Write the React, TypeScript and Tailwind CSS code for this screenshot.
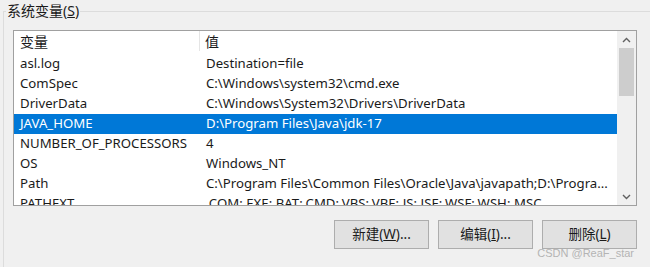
import React from "react";

const rows: [string, string][] = [
  ["asl.log", "Destination=file"],
  ["ComSpec", "C:\\Windows\\system32\\cmd.exe"],
  ["DriverData", "C:\\Windows\\System32\\Drivers\\DriverData"],
  ["JAVA_HOME", "D:\\Program Files\\Java\\jdk-17"],
  ["NUMBER_OF_PROCESSORS", "4"],
  ["OS", "Windows_NT"],
  ["Path", "C:\\Program Files\\Common Files\\Oracle\\Java\\javapath;D:\\Progra..."],
  ["PATHEXT", ".COM;.EXE;.BAT;.CMD;.VBS;.VBE;.JS;.JSE;.WSF;.WSH;.MSC"],
];

const font = { fontFamily: '"Noto Sans", "Noto Sans CJK SC", sans-serif' };

const Btn = ({ label, hot, tail }: { label: string; hot: string; tail: string }) => (
  <button className="w-[95px] h-[29px] bg-[#e1e1e1] border border-[#adadad] text-[13.5px] text-[#1a1a1a] flex items-center justify-center">
    {label}(<span className="underline">{hot}</span>){tail}
  </button>
);

const App = () => {
  return (
    <div className="w-[650px] h-[267px] bg-[#f0f0f0] overflow-hidden text-[#1a1a1a]" style={font}>
      <fieldset className="ml-[3px] w-[700px] h-[300px] border border-[#dcdcdc] px-[9px] pt-0 mt-[1px]">
        <legend className="px-[1px] -ml-[7px] text-[14px] leading-[20px]">
          系统变量(<span className="underline">S</span>)
        </legend>

        {/* list box */}
        <div className="mt-[9px] w-[624px] h-[176px] border border-[#a0a0a0] bg-white flex">
          <div className="w-[603px] overflow-hidden text-[13.2px]">
            <div className="flex h-[23px] items-center text-[14px] pb-[3px]">
              <div className="w-[186px] shrink-0 h-full pl-[6px] flex items-center border-r border-[#e5e5e5]">变量</div>
              <div className="pl-[5px]">值</div>
            </div>
            {rows.map(([k, v], i) => (
              <div
                key={k}
                className={
                  "flex h-[20px] items-center whitespace-nowrap " +
                  (i === 3 ? "bg-[#0078d7] text-white" : "")
                }
              >
                <div className="w-[186px] shrink-0 pl-[6px]">{k}</div>
                <div className="pl-[6px]">{v}</div>
              </div>
            ))}
          </div>
          {/* scrollbar */}
          <div className="w-[19px] bg-[#f0f0f0] flex flex-col items-center">
            <div className="h-[17px] flex items-center justify-center">
              <svg width="9" height="6" viewBox="0 0 9 6">
                <path d="M1 5 L4.5 1.5 L8 5" stroke="#606060" strokeWidth="1.4" fill="none" />
              </svg>
            </div>
            <div className="w-[15px] h-[48px] bg-[#cdcdcd]" />
            <div className="flex-1" />
            <div className="h-[17px] flex items-center justify-center">
              <svg width="9" height="6" viewBox="0 0 9 6">
                <path d="M1 1 L4.5 4.5 L8 1" stroke="#606060" strokeWidth="1.4" fill="none" />
              </svg>
            </div>
          </div>
        </div>

        {/* buttons */}
        <div className="mt-[14px] w-[624px] flex justify-end gap-[9px]">
          <Btn label="新建" hot="W" tail="..." />
          <Btn label="编辑" hot="I" tail="..." />
          <Btn label="删除" hot="L" tail="" />
        </div>
        <div className="w-[624px] flex justify-end pr-[3px] -mt-[4px] text-[11px] text-[#b4b4b4]" style={{ fontFamily: '"Liberation Sans", sans-serif' }}>
          CSDN @ReaF_star
        </div>
      </fieldset>
    </div>
  );
};

export default App;
